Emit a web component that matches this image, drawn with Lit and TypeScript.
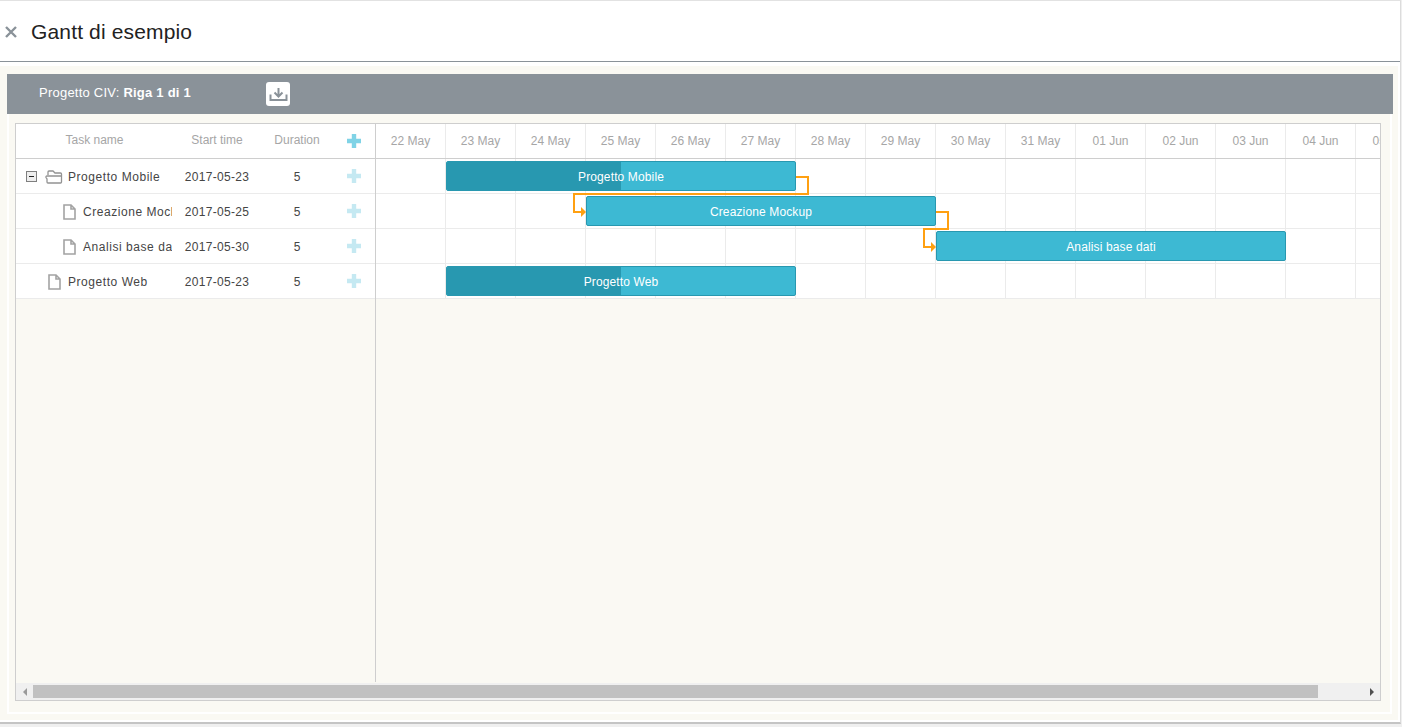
import { LitElement, html, css, svg } from "lit";
import { customElement } from "lit/decorators.js";

const DATES = ["22 May","23 May","24 May","25 May","26 May","27 May","28 May","29 May","30 May","31 May","01 Jun","02 Jun","03 Jun","04 Jun","05 Jun"];
const TASKS = [
  { name: "Progetto Mobile", start: "2017-05-23", indent: 1, kind: "folder" },
  { name: "Creazione Mockup", start: "2017-05-25", indent: 2, kind: "file" },
  { name: "Analisi base dati", start: "2017-05-30", indent: 2, kind: "file" },
  { name: "Progetto Web", start: "2017-05-23", indent: 1, kind: "file" },
];
const BARS = [
  { name: "Progetto Mobile", day: 1, row: 0, days: 5, progress: 50 },
  { name: "Creazione Mockup", day: 3, row: 1, days: 5, progress: 0 },
  { name: "Analisi base dati", day: 8, row: 2, days: 5, progress: 0 },
  { name: "Progetto Web", day: 1, row: 3, days: 5, progress: 50 },
];
const LINKS = [
  { d: "M420 18H432V35H198V53H206", tip: 210, y: 53 },
  { d: "M560 53H572V70H548V88H556", tip: 560, y: 88 },
];

const plus = (cls: string) => html`<svg class=${cls} width="14" height="14" viewBox="0 0 14 14"><path d="M4.8 0h4.4v4.8H14v4.4H9.2V14H4.8V9.2H0V4.8h4.8z"/></svg>`;
const fileIcon = html`<svg class="ico" width="13" height="16" viewBox="0 0 13 16"><path d="M1 1H8L12 5V15H1Z M8 1V5H12" fill="#fff" stroke="#a3a3a3" stroke-width="1.6"/></svg>`;
const folderIcon = html`<svg class="ico" width="18" height="14" viewBox="0 0 18 14"><path d="M3 5V2Q3 1 4 1H8L10 3H15.5Q16.5 3 16.5 4V12Q16.5 13 15.5 13H3Q2 13 2 12V9L1 7.5Q.7 6 2 6H16.5" fill="none" stroke="#939393" stroke-width="1.3"/></svg>`;

@customElement("app-root")
export class AppRoot extends LitElement {
  static styles = css`
    :host { display: block; width: 1402px; height: 727px; overflow: hidden; background: #efefef; font-family: "Liberation Sans", Arial, sans-serif; font-size: 12px; color: #454545; }
    .window { width: 1400px; height: 721px; display: flex; flex-direction: column; background: #fff; border-top: 1px solid #e2e2e2; border-right: 1px solid #dcdcdc; border-bottom: 2px solid #c4c4c4; }
    .head { height: 61px; flex: none; box-sizing: border-box; display: flex; align-items: center; gap: 14px; padding: 2px 0 0 5px; border-bottom: 1px solid #8a9299; }
    .close { display: block; }
    .title { font-size: 21px; letter-spacing: 0.15px; color: #222; }
    .body { flex: 1; margin: 4px 2px 2px 0; background: #faf9f3; padding: 8px 5px 6px 7px; display: flex; flex-direction: column; min-height: 0; }
    .toolbar { flex: none; height: 40px; background: #8a9299; color: #fff; font-size: 13px; letter-spacing: 0.23px; display: flex; align-items: center; padding-left: 32px; }
    .toolbar .label { width: 227px; margin-top: -3px; white-space: nowrap; }
    .dl { width: 24px; height: 24px; background: #fff; border-radius: 3px; display: block; }
    .panel { flex: 1; min-height: 0; display: flex; border: 2px solid #fff; border-top: 0; margin-right: 1px; padding: 9px 9px 11px 6px; }
    .gantt { flex: 1; min-width: 0; border: 1px solid #cecece; display: flex; flex-direction: column; }
    .main { flex: 1; min-height: 0; display: flex; }
    .grid { width: 360px; flex: none; box-sizing: border-box; border-right: 1px solid #cecece; margin-bottom: 1px; }
    .grid-head, .grid-row { display: grid; grid-template-columns: 157px 88px 72px 42px; align-items: center; height: 35px; box-sizing: border-box; }
    .grid-head { background: #fff; color: #a6a6a6; border-bottom: 1px solid #cecece; }
    .grid-head .c { margin-top: -2px; }
    .grid-row { background: #fff; border-bottom: 1px solid #ebebeb; padding-top: 1px; }
    .grid-row .add { margin-top: -1px; }
    .c { text-align: center; overflow: hidden; white-space: nowrap; }
    .date { letter-spacing: 0.3px; }
    .add { display: flex; justify-content: center; }
    .plus-h { fill: #80d3e6; }
    .plus-r { fill: #c5e9f2; }
    .tree { display: flex; align-items: center; overflow: hidden; white-space: nowrap; height: 33px; width: 156px; box-sizing: border-box; letter-spacing: 0.55px; }
    .tree.l1 { padding-left: 32px; }
    .tree.l2 { padding-left: 47px; }
    .tree.folder { padding-left: 10px; }
    .ico { flex: none; display: block; }
    .tree .ico { margin-right: 7px; }
    .tree.folder .ico { margin-right: 5px; }
    .toggle { flex: none; display: block; margin-right: 8px; }
    .time { flex: 1; min-width: 0; overflow: hidden; display: flex; flex-direction: column; }
    .scale, .cells { display: flex; height: 35px; box-sizing: border-box; flex: none; }
    .scale { background: #fff; border-bottom: 1px solid #cecece; color: #a6a6a6; }
    .scale div { width: 70px; flex: none; box-sizing: border-box; border-right: 1px solid #ebebeb; text-align: center; line-height: 34px; }
    .cells { background: #fff; border-bottom: 1px solid #ebebeb; }
    .cells div { width: 70px; flex: none; box-sizing: border-box; border-right: 1px solid #ebebeb; }
    .data { position: relative; flex: 1; }
    .bar { position: absolute; height: 30px; box-sizing: border-box; background: #3db9d3; border: 1px solid #2898b0; border-radius: 2px; color: #fff; text-align: center; line-height: 30px; letter-spacing: 0.13px; overflow: hidden; }
    .prog { position: absolute; left: 0; top: 0; bottom: 0; background: #2898b0; }
    .bar span { position: relative; }
    .links { position: absolute; left: 0; top: 0; width: 100%; height: 100%; pointer-events: none; overflow: visible; z-index: 2; }
    .scroll { flex: none; height: 17px; box-sizing: border-box; background: #f0f0f0; display: flex; padding-top: 2px; }
    .thumb { width: 1285px; height: 13px; background: #c1c1c1; flex: none; }
    .arrow { width: 17px; height: 13px; flex: none; display: flex; align-items: center; justify-content: center; }
    .arrow i { display: block; width: 0; height: 0; border-top: 4px solid transparent; border-bottom: 4px solid transparent; }
    .arrow .lt { border-right: 4px solid #9a9a9a; }
    .arrow .rt { border-left: 4px solid #505050; }
    .fill { flex: 1; }
  `;

  render() {
    return html`
      <div class="window">
        <div class="head">
          <svg class="close" width="12" height="12" viewBox="0 0 12 12"><path d="M1 1L11 11M11 1L1 11" stroke="#8a9299" stroke-width="2.4" fill="none"/></svg>
          <div class="title">Gantt di esempio</div>
        </div>
        <div class="body">
          <div class="toolbar">
            <div class="label">Progetto CIV: <b>Riga 1 di 1</b></div>
            <svg class="dl" viewBox="0 0 24 24"><path d="M4.5 12.5V18H20.5V12.5M12.5 6V14.5M8.5 10.5L12.5 14.5L16.5 10.5" fill="none" stroke="#8a9299" stroke-width="2"/></svg>
          </div>
          <div class="panel">
            <div class="gantt">
              <div class="main">
                <div class="grid">
                  <div class="grid-head">
                    <div class="c">Task name</div><div class="c">Start time</div><div class="c">Duration</div>
                    <div class="add">${plus("plus-h")}</div>
                  </div>
                  ${TASKS.map(t => html`
                    <div class="grid-row">
                      <div class="tree l${t.indent} ${t.kind}">
                        ${t.kind === "folder" ? html`<svg class="toggle" width="11" height="11" viewBox="0 0 11 11"><rect x=".5" y=".5" width="10" height="10" fill="#eee" stroke="#7f7f7f"/><path d="M3 5.5H8" stroke="#222" stroke-width="1"/></svg>${folderIcon}` : fileIcon}
                        <span>${t.name}</span>
                      </div>
                      <div class="c date">${t.start}</div>
                      <div class="c">5</div>
                      <div class="add">${plus("plus-r")}</div>
                    </div>`)}
                </div>
                <div class="time">
                  <div class="scale">${DATES.map(d => html`<div>${d}</div>`)}</div>
                  <div class="data">
                    ${TASKS.map(() => html`<div class="cells">${DATES.map(() => html`<div></div>`)}</div>`)}
                    ${BARS.map(b => html`
                      <div class="bar" style="left:${b.day * 70}px;top:${b.row * 35 + 2}px;width:${b.days * 70}px">
                        ${b.progress ? html`<div class="prog" style="width:${b.progress}%"></div>` : ""}
                        <span>${b.name}</span>
                      </div>`)}
                    <svg class="links">
                      ${LINKS.map(l => svg`
                        <path d=${l.d} fill="none" stroke="#ffa011" stroke-width="2"/>
                        <path d="M${l.tip} ${l.y}L${l.tip - 5} ${l.y - 5}V${l.y + 5}Z" fill="#ffa011"/>`)}
                    </svg>
                  </div>
                </div>
              </div>
              <div class="scroll">
                <div class="arrow"><i class="lt"></i></div>
                <div class="thumb"></div>
                <div class="fill"></div>
                <div class="arrow"><i class="rt"></i></div>
              </div>
            </div>
          </div>
        </div>
      </div>
    `;
  }
}
